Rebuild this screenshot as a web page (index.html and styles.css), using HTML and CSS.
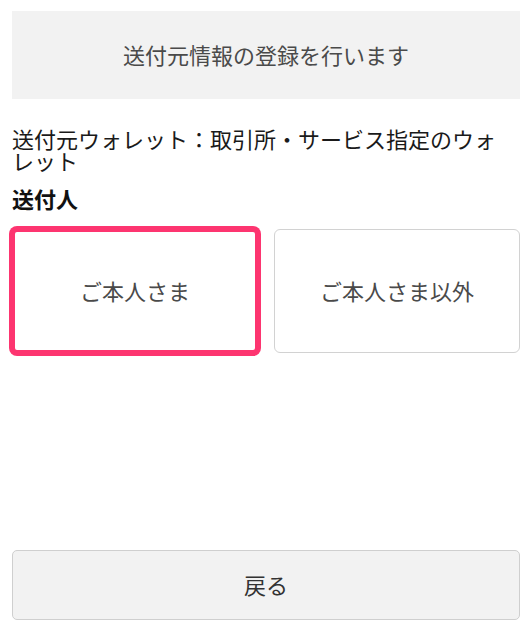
FILE: index.html
```html
<!DOCTYPE html>
<html lang="ja">
<head>
<meta charset="utf-8">
<title>送付元情報の登録</title>
<link rel="stylesheet" href="styles.css">
</head>
<body>
<div class="page">
  <div class="banner">送付元情報の登録を行います</div>
  <p class="desc">送付元ウォレット：取引所・サービス指定のウォレット</p>
  <h2 class="label">送付人</h2>
  <div class="choices">
    <button class="choice selected" type="button">ご本人さま</button>
    <button class="choice" type="button">ご本人さま以外</button>
  </div>
  <div class="footer">
    <button class="back" type="button">戻る</button>
  </div>
</div>
</body>
</html>
```

FILE: styles.css
```css
html, body {
  margin: 0;
  padding: 0;
  background: #ffffff;
}
body {
  font-family: "Noto Sans CJK JP", "Noto Sans", sans-serif;
  color: #1a1a1a;
}
.page {
  box-sizing: border-box;
  min-height: 100vh;
  padding: 11px 9px 7px 12px;
  display: flex;
  flex-direction: column;
}
.banner {
  box-sizing: border-box;
  height: 88px;
  padding-bottom: 3px;
  background: #f2f2f2;
  display: flex;
  align-items: center;
  justify-content: center;
  font-size: 22px;
  color: #4a4a4a;
}
.desc {
  margin: 28px 10px 0 0;
  font-size: 22px;
  line-height: 22px;
  color: #1a1a1a;
}
.label {
  margin: 16px 0 0 0;
  font-size: 22px;
  line-height: 22px;
  font-weight: 700;
  color: #111;
}
.choices {
  margin-top: 20px;
  display: grid;
  grid-template-columns: 1fr 1fr;
  gap: 16px;
}
.choice {
  box-sizing: border-box;
  height: 124px;
  padding: 0 0 3px 0;
  background: #fff;
  border: 1px solid #d2d2d2;
  border-radius: 6px;
  font-family: inherit;
  font-size: 22px;
  color: #4a4a4a;
  cursor: pointer;
}
.choice.selected {
  border: 3px solid #fd3570;
  box-shadow: 0 0 0 3px #fd3570;
  border-radius: 5px;
}
.footer {
  margin-top: auto;
}
.back {
  box-sizing: border-box;
  width: 100%;
  height: 70px;
  padding: 0 0 3px 0;
  background: #f2f2f2;
  border: 1px solid #cfcfcf;
  border-radius: 5px;
  font-family: inherit;
  font-size: 22px;
  color: #333;
  cursor: pointer;
}
```
